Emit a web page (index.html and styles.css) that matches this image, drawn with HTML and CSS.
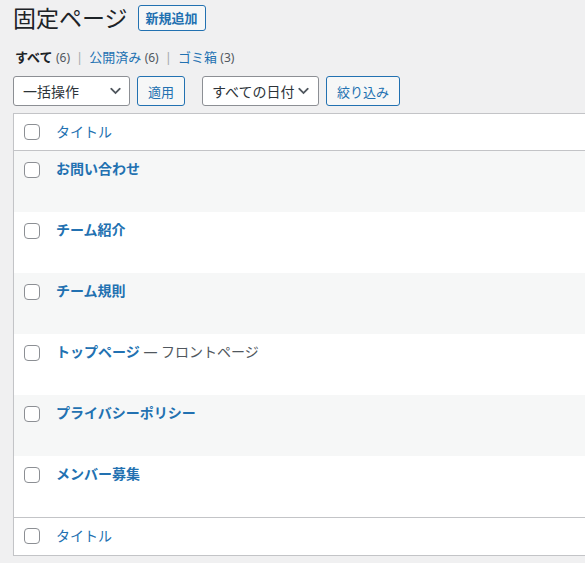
FILE: index.html
```html
<!DOCTYPE html>
<html lang="ja">
<head>
    <meta charset="UTF-8">
    <meta name="viewport" content="width=device-width, initial-scale=1.0">
    <title>固定ページ</title>
    <link rel="stylesheet" href="styles.css">
</head>
<body>

<div class="wrap">
    <div class="page-head">
        <h1>固定ページ</h1>
        <a class="title-action" href="#">新規追加</a>
    </div>

    <ul class="subsubsub">
        <li><b class="current">すべて</b> <span class="count">(6)</span></li>
        <li class="sep">|</li>
        <li><a href="#">公開済み</a> <span class="count">(6)</span></li>
        <li class="sep">|</li>
        <li><a href="#">ゴミ箱</a> <span class="count">(3)</span></li>
    </ul>

    <div class="tablenav">
        <div class="fake-select">
            <span>一括操作</span>
            <svg viewBox="3 4 14 12" width="11" height="10"><path d="M5 6l5 5 5-5 2 1-7 7-7-7 2-1z"/></svg>
        </div>
        <button class="btn" type="button">適用</button>
        <div class="fake-select date">
            <span>すべての日付</span>
            <svg viewBox="3 4 14 12" width="11" height="10"><path d="M5 6l5 5 5-5 2 1-7 7-7-7 2-1z"/></svg>
        </div>
        <button class="btn" type="button">絞り込み</button>
    </div>

    <table class="list">
        <thead>
            <tr>
                <td class="check"><input type="checkbox" class="cb"></td>
                <th><a href="#">タイトル</a></th>
            </tr>
        </thead>
        <tbody>
            <tr><td class="check"><input type="checkbox" class="cb"></td><td><a class="row-title" href="#">お問い合わせ</a></td></tr>
            <tr><td class="check"><input type="checkbox" class="cb"></td><td><a class="row-title" href="#">チーム紹介</a></td></tr>
            <tr><td class="check"><input type="checkbox" class="cb"></td><td><a class="row-title" href="#">チーム規則</a></td></tr>
            <tr><td class="check"><input type="checkbox" class="cb"></td><td><a class="row-title" href="#">トップページ</a> <span class="post-state">— フロントページ</span></td></tr>
            <tr><td class="check"><input type="checkbox" class="cb"></td><td><a class="row-title" href="#">プライバシーポリシー</a></td></tr>
            <tr><td class="check"><input type="checkbox" class="cb"></td><td><a class="row-title" href="#">メンバー募集</a></td></tr>
        </tbody>
        <tfoot>
            <tr>
                <td class="check"><input type="checkbox" class="cb"></td>
                <th><a href="#">タイトル</a></th>
            </tr>
        </tfoot>
    </table>
</div>

</body>
</html>
```

FILE: styles.css
```css
html {
    overflow: hidden;
}
body {
    margin: 0;
    background: #f0f0f1;
    color: #1d2327;
    font-family: "Noto Sans", "Noto Sans CJK JP", sans-serif;
    font-size: 13px;
}
a {
    color: #2271b1;
    text-decoration: none;
}
.wrap {
    padding: 3px 0 0 13px;
}
.page-head {
    display: flex;
    align-items: center;
    gap: 10px;
}
h1 {
    margin: 0;
    font-size: 23px;
    font-weight: 400;
    line-height: 30px;
}
.title-action {
    box-sizing: border-box;
    height: 26px;
    line-height: 24px;
    padding: 0 7px;
    border: 1px solid #2271b1;
    border-radius: 3px;
    background: #f6f7f7;
    font-size: 13px;
    font-weight: 600;
}
.subsubsub {
    list-style: none;
    margin: 14px 0 0 2px;
    padding: 0;
    display: flex;
    gap: 6px;
    line-height: 20px;
}
.subsubsub .current {
    color: #1d2327;
    font-weight: 600;
}
.count {
    color: #50575e;
    font-size: 12px;
}
.sep {
    color: #a7aaad;
}
.tablenav {
    display: flex;
    gap: 7px;
    margin-top: 8px;
}
.fake-select {
    box-sizing: border-box;
    width: 117px;
    height: 30px;
    padding: 0 8px 0 9px;
    border: 1px solid #8c8f94;
    border-radius: 3px;
    background: #fff;
    display: flex;
    align-items: center;
    justify-content: space-between;
    font-size: 14px;
    color: #2c3338;
    white-space: nowrap;
}
.fake-select svg {
    flex: none;
    fill: #50575e;
}
.fake-select.date {
    margin-left: 10px;
    padding-right: 9px;
}
.btn {
    box-sizing: border-box;
    height: 30px;
    padding: 0 10px;
    border: 1px solid #2271b1;
    border-radius: 3px;
    background: #f6f7f7;
    color: #2271b1;
    font-family: inherit;
    font-size: 13px;
    cursor: pointer;
}
.list {
    width: 800px;
    margin-top: 7px;
    border-collapse: collapse;
    border: 1px solid #c3c4c7;
    background: #fff;
    box-shadow: 0 1px 1px rgba(0, 0, 0, .04);
}
.list td, .list th {
    padding: 8px 10px;
    text-align: left;
    vertical-align: top;
    font-size: 14px;
    line-height: 20px;
}
.list th {
    font-weight: 400;
}
.list thead tr {
    border-bottom: 1px solid #c3c4c7;
}
.list tfoot tr {
    border-top: 1px solid #c3c4c7;
}
.list thead td, .list thead th {
    height: 20px;
}
.list tfoot td, .list tfoot th {
    height: 21px;
}
.list tbody td {
    height: 45px;
}
.list tbody tr:nth-child(odd) {
    background: #f6f7f7;
}
.list .check {
    width: 22px;
    padding: 11px 0 0 10px;
}
.list thead .check, .list tfoot .check {
    padding-top: 10px;
}
.cb {
    appearance: none;
    display: block;
    box-sizing: border-box;
    width: 16px;
    height: 16px;
    margin: 0;
    border: 1px solid #8c8f94;
    border-radius: 4px;
    background: #fff;
}
.row-title {
    font-weight: 600;
}
.post-state {
    color: #50575e;
}
```
